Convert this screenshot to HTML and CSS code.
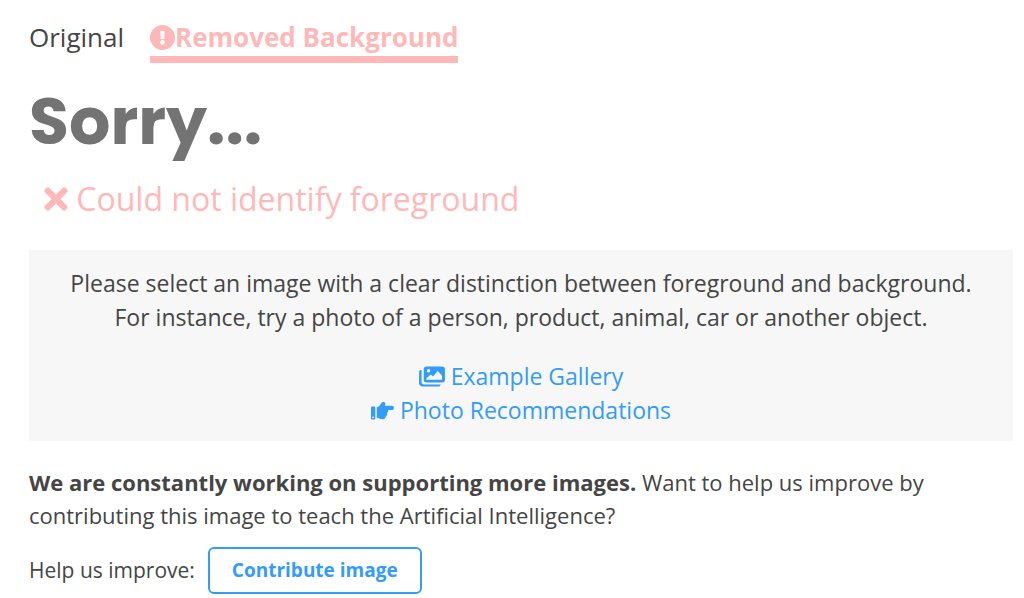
FILE: index.html
```html
<!DOCTYPE html>
<html lang="en">
<head>
    <meta charset="UTF-8">
    <meta name="viewport" content="width=device-width, initial-scale=1.0">
    <title>Removed Background</title>
    <link rel="stylesheet" href="styles.css">
</head>
<body>
    <main class="result">
        <nav class="tabs">
            <a class="tab" href="#original">Original</a>
            <a class="tab active" href="#removed">
                <svg class="tab-icon" viewBox="8 8 496 496" aria-hidden="true"><path fill="currentColor" fill-rule="evenodd" d="M504 256c0 137-111 248-248 248S8 393 8 256 119 8 256 8s248 111 248 248zM256 306c-25.400 0-46 20.600-46 46s20.600 46 46 46 46-20.600 46-46-20.600-46-46-46zm-43.700-165.300l7.400 136c.4 6.400 5.600 11.300 12 11.300h48.500c6.400 0 11.600-5 12-11.300l7.400-136c.4-6.900-5.100-12.700-12-12.700h-63.400c-6.900 0-12.300 5.800-11.900 12.700z"/></svg>Removed Background</a>
        </nav>

        <h1>Sorry...</h1>

        <p class="error">
            <svg class="error-icon" viewBox="0 0 352 512" aria-hidden="true"><path fill="currentColor" d="M242.700 256l100.100-100.100c12.300-12.300 12.300-32.200 0-44.500l-22.200-22.200c-12.300-12.300-32.200-12.300-44.500 0L176 189.300 75.900 89.200c-12.300-12.300-32.200-12.300-44.500 0L9.200 111.500c-12.300 12.300-12.300 32.200 0 44.500L109.300 256 9.200 356.100c-12.300 12.300-12.300 32.200 0 44.500l22.200 22.200c12.300 12.300 32.200 12.300 44.500 0L176 322.700l100.100 100.100c12.300 12.300 32.200 12.300 44.500 0l22.200-22.200c12.300-12.300 12.300-32.200 0-44.500L242.700 256z"/></svg>
            Could not identify foreground
        </p>

        <div class="tips">
            <p>Please select an image with a clear distinction between foreground and background.<br>
            For instance, try a photo of a person, product, animal, car or another object.</p>
            <ul>
                <li><a href="#gallery">
                    <svg class="link-icon gallery" viewBox="0 0 576 512" aria-hidden="true"><path fill="currentColor" fill-rule="evenodd" d="M160 32h360c31 0 56 25 56 56v248c0 31-25 56-56 56H160c-31 0-56-25-56-56V88c0-31 25-56 56-56zM160 330h352v-88l-96-108-108 124-48-48-100 84zM212 90a38 38 0 1 0 0 76 38 38 0 1 0 0-76zM56 104v272c0 31 25 56 56 56h368c0 28-20 48-48 48H80c-44 0-80-36-80-80V152c0-28 28-48 56-48z"/></svg>
                    Example Gallery</a></li>
                <li><a href="#recommendations">
                    <svg class="link-icon" viewBox="0 0 512 512" aria-hidden="true"><path fill="currentColor" d="M512 199.700c0 25.100-22.300 46.300-47.500 46.300h-83.200c10.100 24.900-4.300 51.900-25.200 63.800 12.300 26.500 2.700 61.400-26.800 73.200C332.600 431.400 299.400 448 256 448c-63.300 0-82.600-32-128-32V186.300c53.600 0 91.700-84.500 107.800-100.700C253 68.200 247.200 64 279.100 64c25.600 0 41.100 18 41.100 39.800 0 15.400-4.400 31.800-13.700 48.200h158c25.200 0 47.500 22.500 47.500 47.700zM96 192v240c0 13.300-10.700 24-24 24H24c-13.300 0-24-10.700-24-24V192c0-13.300 10.700-24 24-24h48c13.300 0 24 10.700 24 24zM68 408c0-11-9-20-20-20s-20 9-20 20 9 20 20 20 20-9 20-20z"/></svg>
                    Photo Recommendations</a></li>
            </ul>
        </div>

        <p class="improve"><strong>We are constantly working on supporting more images.</strong> Want to help us improve by contributing this image to teach the Artificial Intelligence?</p>

        <div class="contribute">
            <span>Help us improve:</span>
            <button type="button">Contribute image</button>
        </div>
    </main>
</body>
</html>
```
FILE: styles.css
```css
* {
    box-sizing: border-box;
}
body {
    margin: 0;
    background-color: #fff;
    color: #454545;
    font-family: "Open Sans", sans-serif;
    font-size: 22px;
    line-height: 33px;
}
h1, p, ul {
    margin: 0;
    padding: 0;
}
a {
    color: #339cf8;
    text-decoration: none;
}
.result {
    padding: 18px 11px 0 29px;
}
.tabs {
    display: flex;
    gap: 26px;
}
.tab {
    color: #454545;
    font-size: 26px;
    line-height: 38px;
}
.tab.active {
    color: #ffb8b8;
    font-weight: 700;
    border-bottom: 7px solid #ffb8b8;
}
.tab-icon {
    width: 25px;
    height: 25px;
    vertical-align: -3px;
}
h1 {
    margin-top: 10px;
    color: #737373;
    font-family: Poppins, "Open Sans", sans-serif;
    font-size: 65px;
    font-weight: 700;
    line-height: 98px;
}
.error {
    margin-top: 2px;
    padding: 0 15px;
    color: #ffb8b8;
    font-size: 32px;
    line-height: 52px;
}
.error-icon {
    width: 24px;
    height: 34px;
    vertical-align: -5px;
}
.tips {
    margin-top: 25px;
    padding: 16px 20px 14px;
    background-color: #f7f7f7;
    font-size: 23px;
    line-height: 34px;
    text-align: center;
}
.tips ul {
    margin-top: 25px;
    list-style: none;
}
.link-icon {
    width: 23px;
    height: 23px;
    vertical-align: -3px;
}
.link-icon.gallery {
    width: 26px;
}
.improve {
    margin-top: 25px;
}
.contribute {
    display: flex;
    align-items: center;
    gap: 13px;
    margin-top: 15px;
    font-size: 21px;
}
button {
    padding: 5px 22px;
    border: 2px solid #339cf8;
    border-radius: 6px;
    background-color: #fff;
    color: #339cf8;
    font: inherit;
    font-size: 19px;
    font-weight: 700;
    cursor: pointer;
}
```
